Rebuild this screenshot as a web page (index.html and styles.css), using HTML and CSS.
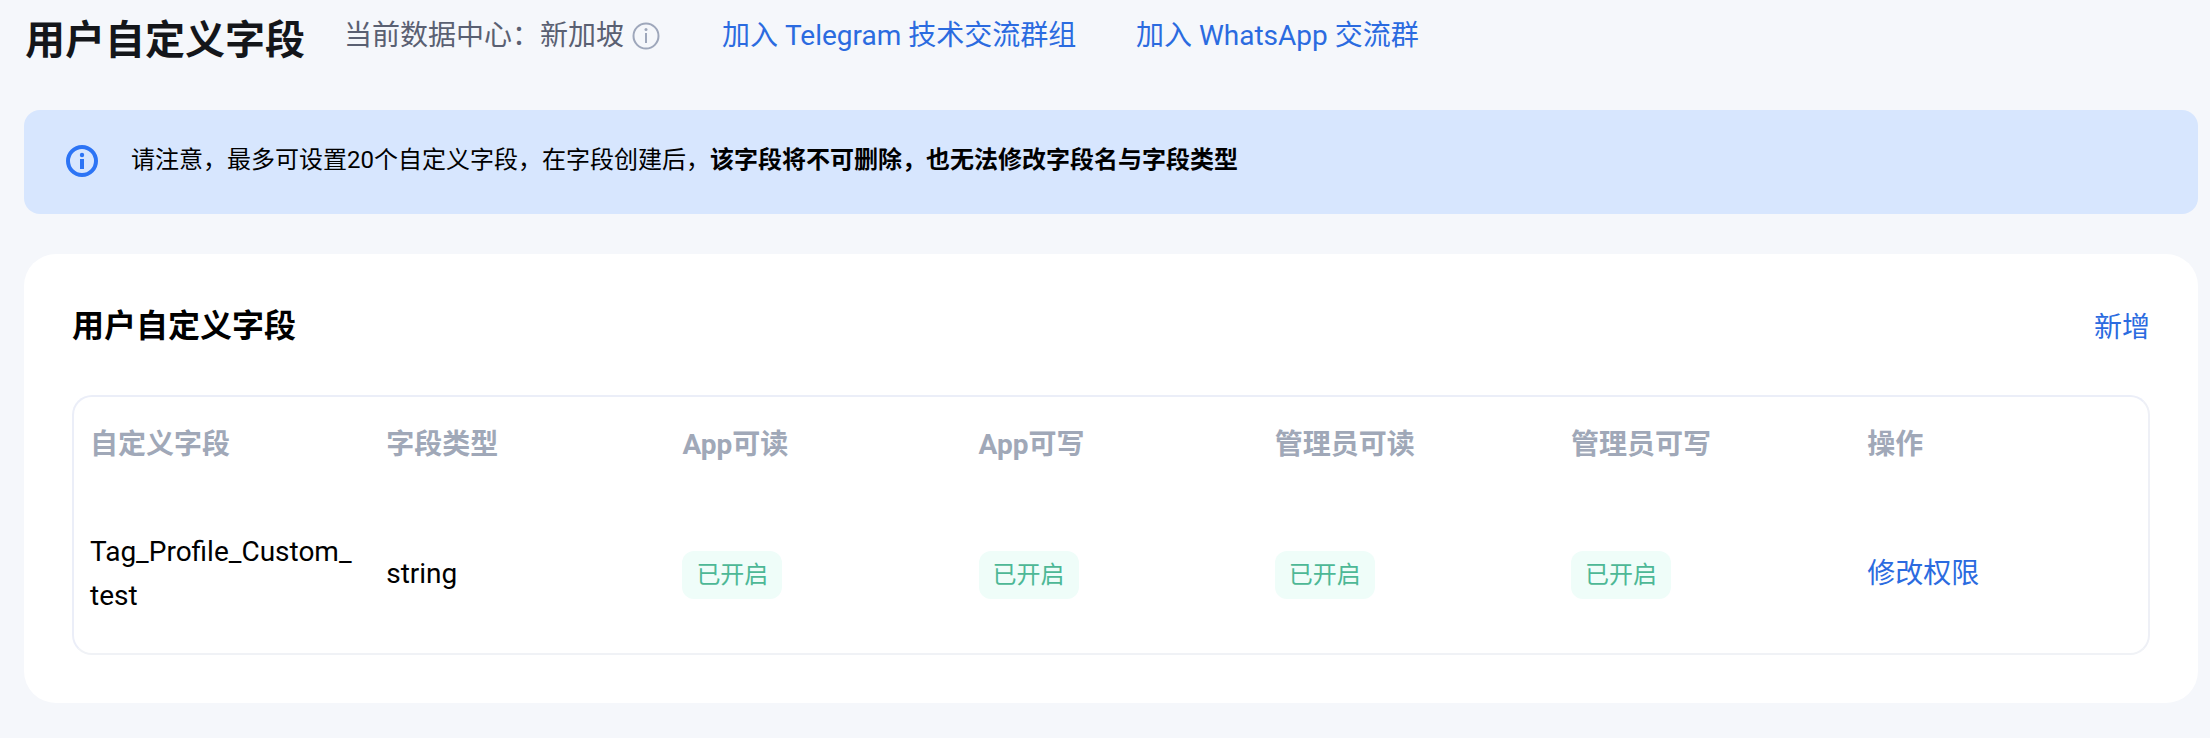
FILE: index.html
```html
<!DOCTYPE html>
<html lang="zh-CN">
<head>
<meta charset="utf-8">
<title>用户自定义字段</title>
<link rel="stylesheet" href="styles.css">
</head>
<body>
<header class="top">
  <h1 class="page-title">用户自定义字段</h1>
  <div class="center">
    <span>当前数据中心&#xFF1A;新加坡</span>
    <svg class="info-small" viewBox="0 0 28 28" aria-hidden="true"><circle cx="14" cy="14" r="12.5" fill="none" stroke="#9ea7bb" stroke-width="2"/><circle cx="14" cy="7.5" r="1.5" fill="#9ea7bb"/><rect x="13" y="11" width="2" height="10" fill="#9ea7bb"/></svg>
  </div>
  <a class="link first">加入 Telegram 技术交流群组</a>
  <a class="link second">加入 WhatsApp 交流群</a>
</header>
<section class="alert">
  <svg class="info-big" viewBox="0 0 32 32" aria-hidden="true"><circle cx="16" cy="16" r="14" fill="none" stroke="#2c74f5" stroke-width="4"/><circle cx="16" cy="10" r="2.2" fill="#2c74f5"/><rect x="14" y="14" width="4" height="10" fill="#2c74f5"/></svg>
  <p class="alert-text">请注意&#xFF0C;最多可设置20个自定义字段&#xFF0C;在字段创建后&#xFF0C;<strong>该字段将不可删除&#xFF0C;也无法修改字段名与字段类型</strong></p>
</section>
<section class="card">
  <div class="card-head">
    <h2 class="card-title">用户自定义字段</h2>
    <a class="add">新增</a>
  </div>
  <div class="table">
    <div class="row head">
      <div class="cell">自定义字段</div>
      <div class="cell">字段类型</div>
      <div class="cell">App可读</div>
      <div class="cell">App可写</div>
      <div class="cell">管理员可读</div>
      <div class="cell">管理员可写</div>
      <div class="cell">操作</div>
    </div>
    <div class="row body">
      <div class="cell name">Tag_Profile_Custom_test</div>
      <div class="cell">string</div>
      <div class="cell"><span class="tag">已开启</span></div>
      <div class="cell"><span class="tag">已开启</span></div>
      <div class="cell"><span class="tag">已开启</span></div>
      <div class="cell"><span class="tag">已开启</span></div>
      <div class="cell"><a class="action">修改权限</a></div>
    </div>
  </div>
</section>
</body>
</html>
```
FILE: styles.css
```css
* { box-sizing: border-box; }
html, body { margin: 0; }
body {
  width: 2210px;
  height: 738px;
  overflow: hidden;
  background: #f5f7fb;
  padding: 0 12px 0 24px;
  font-family: Roboto, "Noto Sans CJK SC", sans-serif;
  color: #000;
}
.top {
  height: 110px;
  display: flex;
  align-items: flex-start;
}
.page-title {
  margin: 16px 0 0 1px;
  font-size: 40px;
  line-height: 50px;
  font-weight: 700;
  color: #14161a;
  width: 319px;
}
.center {
  display: flex;
  align-items: center;
  margin-top: 16px;
  font-size: 28px;
  line-height: 40px;
  color: #5a6072;
  width: 378px;
}
.info-small { width: 28px; height: 28px; margin-left: 8px; }
.link {
  margin-top: 16px;
  font-size: 28px;
  line-height: 40px;
  color: #2b6be0;
  white-space: nowrap;
}
.first { width: 414px; }
.alert {
  height: 104px;
  background: #d7e6fe;
  border-radius: 16px;
  display: flex;
  align-items: center;
  padding-left: 42px;
}
.info-big { width: 32px; height: 32px; margin-top: -3px; }
.alert-text {
  margin: -4px 0 0 33px;
  font-size: 24px;
  line-height: 36px;
}
.alert-text strong { font-weight: 700; }
.card {
  margin-top: 40px;
  height: 449px;
  background: #fff;
  border-radius: 32px;
  padding: 0 48px;
}
.card-head {
  height: 141px;
  display: flex;
  justify-content: space-between;
  align-items: flex-start;
  padding-top: 50px;
}
.card-title {
  margin: 0;
  font-size: 32px;
  line-height: 44px;
  font-weight: 700;
}
.add {
  margin-top: 2px;
  font-size: 28px;
  line-height: 44px;
  color: #2b6be0;
}
.table {
  height: 260px;
  border: 2px solid #ebeef8;
  border-bottom-color: #f0f2f6;
  border-right-color: #eef0f6;
  border-radius: 20px;
}
.row {
  display: grid;
  grid-template-columns: repeat(7, 296.2px);
  align-items: center;
  padding-left: 16px;
}
.head {
  height: 90px;
  font-size: 28px;
  font-weight: 700;
  color: #a0a8b8;
}
.body {
  height: 167px;
  font-size: 28px;
  line-height: 44px;
  padding-top: 6px;
}
.cell { padding-right: 28px; }
.name { word-break: break-all; }
.tag {
  display: inline-block;
  height: 48px;
  margin-top: 2px;
  padding: 0 14px;
  border-radius: 12px;
  background: #effdf9;
  color: #4db896;
  font-size: 24px;
  line-height: 48px;
}
.action { color: #2b6be0; }
```
